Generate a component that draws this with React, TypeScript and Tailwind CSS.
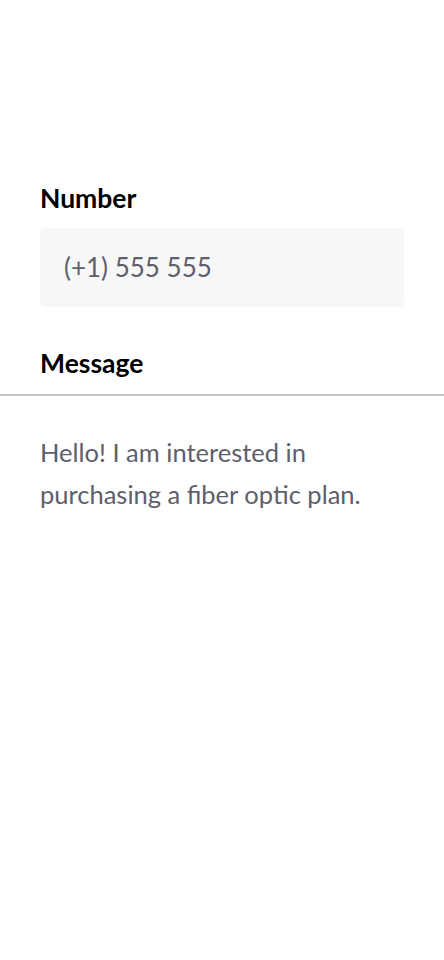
import React from 'react';

export default function App() {
  return (
    <div className="min-h-[960px] w-full bg-white font-['Lato','Liberation_Sans',sans-serif]">
      <div className="pt-[182px] px-10">
        <label className="block text-[26.5px] font-bold leading-[32px] text-black">Number</label>
        <div className="mt-[14px] h-[78px] w-[364px] rounded-[5px] bg-[#f7f7f7] shadow-[0_1px_2px_rgba(0,0,0,0.04)] flex items-center px-6">
          <span className="text-[26px] text-[#5e5e6c]">(+1) 555 555</span>
        </div>
        <label className="mt-[41px] block text-[26.5px] font-bold leading-[32px] text-black">Message</label>
      </div>
      <div className="mt-[15px] h-[2px] w-full bg-[#c4c4c4]" />
      <p className="px-10 pt-[35px] text-[25.5px] leading-[42px] text-[#5e5e6c] w-[420px]">
        Hello! I am interested in purchasing a fiber optic plan.
      </p>
    </div>
  );
}
